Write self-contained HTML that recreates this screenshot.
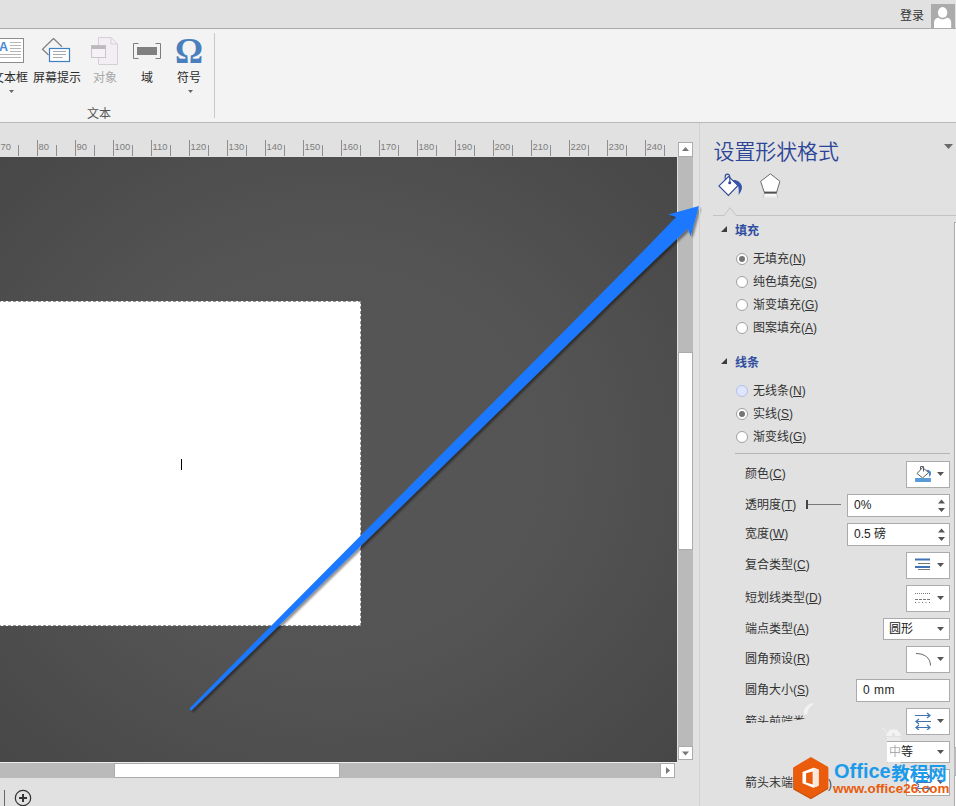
<!DOCTYPE html>
<html lang="zh-CN">
<head>
<meta charset="utf-8">
<title>设置形状格式</title>
<style>
*{box-sizing:border-box;margin:0;padding:0}
html,body{width:956px;height:806px;overflow:hidden;background:#e1e1e1}
body{position:relative;font-family:"Liberation Sans","Noto Sans CJK SC",sans-serif;font-size:12px;color:#333}
.abs{position:absolute}
.t{position:absolute;white-space:nowrap;line-height:16px;height:16px}
u{text-decoration:underline;text-underline-offset:1px}
/* top */
#topbar{left:0;top:0;width:956px;height:28px;background:#e1e1e1}
#topline{left:0;top:28px;width:956px;height:1px;background:#ababab}
#ribbon{left:0;top:29px;width:956px;height:93px;background:#f3f3f3}
#ribline{left:0;top:122px;width:956px;height:1px;background:#b9b9b9}
/* canvas */
#canvas{left:0;top:157px;width:677px;height:605px;background:radial-gradient(ellipse 520px 470px at 330px 300px,#565656 0%,#545454 45%,#4a4a4a 80%,#454545 100%);overflow:hidden}
#page{left:-2px;top:144px;width:363px;height:325px;background:#fff;border:1px dashed #969696}
#vtrack{left:678px;top:157px;width:15px;height:589px;background:#bababa}
.sbtn{position:absolute;background:#fff;border:1px solid #ababab}
#htrack{left:0;top:763px;width:661px;height:15px;background:#bababa}
/* panel */
#pline{left:699px;top:123px;width:1px;height:683px;background:#d2d2d2}
.radio{position:absolute;width:12px;height:12px;border-radius:50%;background:#fff;border:1px solid #a0a0a0}
.radio.on::after{content:"";position:absolute;left:2px;top:2px;width:6px;height:6px;border-radius:50%;background:#747474}
.box{position:absolute;background:#fff;border:1px solid #ababab}
.dd{position:absolute;width:7px;height:4px;background:#555;clip-path:polygon(0 0,100% 0,50% 100%)}
.hd{color:#2f4d9f;font-weight:bold}
</style>
</head>
<body>
<div id="topbar" class="abs"></div>
<div id="topline" class="abs"></div>
<div id="ribbon" class="abs"></div>
<div id="ribline" class="abs"></div>

<!-- top right login -->
<div class="t" style="left:900px;top:8px">登录</div>
<svg class="abs" style="left:931px;top:4px" width="24" height="24" viewBox="0 0 24 24"><rect width="24" height="24" fill="#ababab"/><ellipse cx="11.6" cy="8.400" rx="4.700" ry="5.300" fill="#fff"/><path d="M3 24v-5.5c0-3 2.2-4.7 4.6-4.7c1.2 1 2.6 1.5 4 1.5s2.800-.5 4-1.500c2.400 0 4.600 1.700 4.600 4.700V24z" fill="#fff"/></svg>


<!-- ribbon: text box -->
<svg class="abs" style="left:0;top:37px" width="26" height="27" viewBox="0 0 26 27">
  <rect x="-2" y="1.500" width="25.500" height="24" fill="#fff" stroke="#8c8c8c" stroke-width="1"/>
  <path d="M10 5.500h11M10 8.500h11M10 11.500h11M10 14.500h11M0 17.500h21M0 20.500h21" stroke="#b5b5b5" stroke-width="1"/>
  <text x="-1" y="14.200" font-family="Liberation Sans, sans-serif" font-size="12.5" font-weight="bold" fill="#4a8ad4">A</text>
</svg>
<div class="t" style="left:-8px;top:70px;color:#2b2b2b">文本框</div>
<div class="dd" style="left:9px;top:90px;width:5px;height:3px;background:#666"></div>

<!-- ribbon: screen tip -->
<svg class="abs" style="left:40px;top:36px" width="32" height="28" viewBox="0 0 32 28">
  <path d="M13.500 2.500L2.500 13.300l6 5.700M13.500 2.500l8.500 8.300" fill="none" stroke="#808080" stroke-width="1.200"/>
  <rect x="9.500" y="12.500" width="20" height="13" fill="#fff" stroke="#3f7fc4" stroke-width="1.200"/>
  <path d="M13 15.500h13M13 18.500h13M13 21.500h9.500" stroke="#a9a9a9" stroke-width="1"/>
</svg>
<div class="t" style="left:33px;top:70px;color:#2b2b2b">屏幕提示</div>

<!-- ribbon: object (disabled) -->
<svg class="abs" style="left:90px;top:36px" width="30" height="30" viewBox="0 0 30 30">
  <path d="M8.500 1.500h12.500l6.500 6.500v20.500h-19z" fill="#f3eef3" stroke="#d5d0d5" stroke-width="1"/>
  <path d="M21 1.500v6.500h6.500" fill="none" stroke="#d5d0d5" stroke-width="1"/>
  <rect x="1.500" y="9.500" width="14" height="12" fill="#f6f1f6" stroke="#c9c5c9" stroke-width="1"/>
  <rect x="1.500" y="9.500" width="14" height="3.500" fill="#bcb9bc"/>
</svg>
<div class="t" style="left:93px;top:70px;color:#a8a8a8">对象</div>

<!-- ribbon: field -->
<svg class="abs" style="left:132px;top:42px" width="30" height="18" viewBox="0 0 30 18">
  <path d="M6.500 1.500h-5v15h5M23.500 1.500h5v15h-5" fill="none" stroke="#7d7d7d" stroke-width="1"/>
  <rect x="5" y="5" width="20" height="8" fill="#808080"/>
</svg>
<div class="t" style="left:141px;top:70px;color:#2b2b2b">域</div>

<!-- ribbon: symbol -->
<div class="abs" style="left:174px;top:32px;width:30px;height:40px;line-height:40px;text-align:center;font-family:'Liberation Serif',serif;font-weight:bold;font-size:35px;color:#4a7fbd">Ω</div>
<div class="t" style="left:177px;top:70px;color:#2b2b2b">符号</div>
<div class="dd" style="left:188px;top:90px;width:5px;height:3px;background:#666"></div>

<div class="t" style="left:87px;top:106px;color:#555">文本</div>
<div class="abs" style="left:214px;top:33px;width:1px;height:85px;background:#c8c8c8"></div>


<svg class="abs" style="left:0;top:123px" width="677" height="34" viewBox="0 0 677 34">
<path d="M-0.5 17v16M18.5 22v11M37.5 17v16M56.5 22v11M75.5 17v16M94.5 22v11M113.5 17v16M132.5 22v11M151.5 17v16M170.5 22v11M189.5 17v16M208.5 22v11M227.5 17v16M246.5 22v11M265.5 17v16M284.5 22v11M303.5 17v16M322.5 22v11M341.5 17v16M360.5 22v11M379.5 17v16M398.5 22v11M417.5 17v16M436.5 22v11M455.5 17v16M474.5 22v11M493.5 17v16M512.5 22v11M531.5 17v16M550.5 22v11M569.5 17v16M588.5 22v11M607.5 17v16M626.5 22v11M645.5 17v16M664.5 22v11" stroke="#8e8e8e" stroke-width="1" fill="none"/>
<g font-family="Liberation Sans, sans-serif" font-size="9.4" fill="#7c7c7c"><text x="0.6" y="27">70</text><text x="38.6" y="27">80</text><text x="76.6" y="27">90</text><text x="114.6" y="27">100</text><text x="152.6" y="27">110</text><text x="190.6" y="27">120</text><text x="228.6" y="27">130</text><text x="266.6" y="27">140</text><text x="304.6" y="27">150</text><text x="342.6" y="27">160</text><text x="380.6" y="27">170</text><text x="418.6" y="27">180</text><text x="456.6" y="27">190</text><text x="494.6" y="27">200</text><text x="532.6" y="27">210</text><text x="570.6" y="27">220</text><text x="608.6" y="27">230</text><text x="646.6" y="27">240</text></g>
</svg>

<!-- canvas -->
<div id="canvas" class="abs">
  <div id="page" class="abs"></div>
  <div class="abs" style="left:181px;top:302px;width:1px;height:11px;background:#000"></div>
</div>
<div id="vtrack" class="abs"></div>
<div class="sbtn" style="left:678px;top:142px;width:15px;height:15px"></div>
<div class="sbtn" style="left:678px;top:352px;width:15px;height:198px;border-color:#ababab"></div>
<div class="sbtn" style="left:678px;top:746px;width:15px;height:14px"></div>
<svg class="abs" style="left:678px;top:142px" width="15" height="15"><path d="M4 9l3.500-4l3.500 4z" fill="#777"/></svg>
<svg class="abs" style="left:678px;top:746px" width="15" height="14"><path d="M4 5.500h7l-3.500 4z" fill="#777"/></svg>
<div class="abs" style="left:0;top:762px;width:677px;height:1px;background:#ececec"></div>
<div id="htrack" class="abs"></div>
<div class="sbtn" style="left:114px;top:763px;width:226px;height:15px"></div>
<div class="sbtn" style="left:660px;top:763px;width:15px;height:15px"></div>
<svg class="abs" style="left:660px;top:763px" width="15" height="15"><path d="M6 4l4 3.500l-4 3.500z" fill="#777"/></svg>

<!-- bottom-left -->
<div class="abs" style="left:4px;top:790px;width:1px;height:16px;background:#666"></div>
<svg class="abs" style="left:14px;top:789px" width="18" height="17" viewBox="0 0 18 17"><circle cx="9" cy="9" r="7.700" fill="none" stroke="#333" stroke-width="1.200"/><path d="M5 9h8M9 5v8" stroke="#333" stroke-width="2"/></svg>


<svg class="abs" style="left:0;top:0;pointer-events:none" width="956" height="806" viewBox="0 0 956 806">
  <defs><filter id="sh" x="-5%" y="-5%" width="110%" height="110%"><feGaussianBlur in="SourceAlpha" stdDeviation="1.1"/><feOffset dx="1.6" dy="2"/><feComponentTransfer><feFuncA type="linear" slope="0.44"/></feComponentTransfer><feMerge><feMergeNode/><feMergeNode in="SourceGraphic"/></feMerge></filter></defs>
  <path d="M190.0 707.9 L218.0 679.4 L249.6 647.4 L358.8 537.4 L467.4 428.2 L557.0 338.2 L610.5 284.2 L647.7 246.4 L676.1 217.1 L668.3 214.4 L699.0 205.9 L690.5 236.3 L687.9 228.4 L658.0 256.8 L619.8 293.6 L565.3 346.5 L474.4 435.3 L364.1 542.7 L253.0 650.8 L220.7 682.1 L191.8 709.9 A1.35 1.35 0 0 1 190.0 707.9Z" fill="#1a79ff" filter="url(#sh)"/>
</svg>


<!-- panel -->
<div id="pline" class="abs"></div>

<div class="abs" style="left:713.500px;top:138px;font-size:21px;line-height:28px;font-weight:350;color:#2b4497;white-space:nowrap;letter-spacing:-0.100px">设置形状格式</div>
<div class="dd" style="left:944px;top:144px;width:9px;height:5px;background:#6a6a6a"></div>

<!-- tab icons -->
<svg class="abs" style="left:717px;top:172px" width="28" height="27" viewBox="0 0 28 27">
  <path d="M15.800 8C19.500 7.400 24.100 10 24.900 14.300C25.400 17.500 23.600 20.500 21.500 23C22 19.500 21.800 16.500 21 13.500Z" fill="#3553ad"/>
  <path d="M2 13.900L11.600 4.500L21 13.500L11.400 23.500z" fill="#fff" stroke="#2f4899" stroke-width="1.100" stroke-linejoin="miter"/>
  <path d="M8.200 8V4.600a2.300 2.500 0 0 1 4.600 0V10.500" fill="none" stroke="#2f4899" stroke-width="1.100"/>
  <circle cx="12.700" cy="10.700" r="1.500" fill="#2f4899"/>
</svg>
<svg class="abs" style="left:758px;top:172px" width="26" height="28" viewBox="0 0 26 28">
  <defs><linearGradient id="pg" x1="0" y1="0" x2="0" y2="1"><stop offset="0" stop-color="#fff" stop-opacity="1"/><stop offset="1" stop-color="#fff" stop-opacity="0"/></linearGradient></defs>
  <path d="M6.400 21.500h12.100l1.500 5h-15.100z" fill="url(#pg)"/>
  <path d="M6.400 21.500l-1.400 4.500M18.500 21.500l1.400 4.500" stroke="#bdbdbd" stroke-width="1" opacity=".7"/>
  <path d="M12.400 1.800L21.900 9.300L18.500 20.600h-12.100L2.600 9.300z" fill="#fff" stroke="#6b6b6b" stroke-width="1" stroke-linejoin="round"/>
  <path d="M6.200 20.600h12.500" stroke="#505050" stroke-width="2"/>
</svg>

<!-- separator with notch -->
<svg class="abs" style="left:713px;top:206px" width="243" height="11" viewBox="0 0 243 11">
  <path d="M0 9.500h11l6-7.800l6 7.800H243" fill="none" stroke="#c3c3c3" stroke-width="1"/>
</svg>

<!-- section: fill -->
<svg class="abs" style="left:720px;top:225px" width="8" height="8"><path d="M7 1v6H1z" fill="#3c3c3c"/></svg>
<div class="t hd" style="left:735px;top:223px">填充</div>

<div class="radio on" style="left:736px;top:253px"></div>
<div class="t" style="left:753px;top:251px">无填充(<u>N</u>)</div>
<div class="radio" style="left:736px;top:276px"></div>
<div class="t" style="left:753px;top:274px">纯色填充(<u>S</u>)</div>
<div class="radio" style="left:736px;top:299px"></div>
<div class="t" style="left:753px;top:297px">渐变填充(<u>G</u>)</div>
<div class="radio" style="left:736px;top:322px"></div>
<div class="t" style="left:753px;top:320px">图案填充(<u>A</u>)</div>

<!-- section: line -->
<svg class="abs" style="left:720px;top:357px" width="8" height="8"><path d="M7 1v6H1z" fill="#3c3c3c"/></svg>
<div class="t hd" style="left:735px;top:355px">线条</div>

<div class="radio" style="left:736px;top:385px;background:#dfe5fb;border-color:#b4bfe9"></div>
<div class="t" style="left:753px;top:383px">无线条(<u>N</u>)</div>
<div class="radio on" style="left:736px;top:408px"></div>
<div class="t" style="left:753px;top:406px">实线(<u>S</u>)</div>
<div class="radio" style="left:736px;top:431px"></div>
<div class="t" style="left:753px;top:429px">渐变线(<u>G</u>)</div>

<div class="abs" style="left:735px;top:453px;width:215px;height:1px;background:#b4b4b4"></div>

<!-- color -->
<div class="t" style="left:745px;top:466px">颜色(<u>C</u>)</div>
<div class="box" style="left:906px;top:461px;width:44px;height:27px"></div>
<svg class="abs" style="left:913px;top:464px" width="22" height="20" viewBox="0 0 22 20">
  <path d="M13.400 5.700C16 5.500 17.900 7 18 9.200C18 10.800 17 12 15.800 13.200C16.200 11.500 16.200 10 15.700 8.600Z" fill="#3f7fc4"/>
  <path d="M4 9.500L9.600 3.600L15.700 8.600L9.600 13.900z" fill="#fff" stroke="#5a5a5a" stroke-width="1" stroke-linejoin="miter"/>
  <path d="M7.500 5.500V2.500h3V7.500" fill="none" stroke="#5a5a5a" stroke-width="1"/>
  <rect x="2.100" y="14" width="15.800" height="4" fill="#5b9bd5"/>
</svg>
<div class="dd" style="left:937px;top:472px"></div>

<!-- transparency -->
<div class="t" style="left:745px;top:497px">透明度(<u>T</u>)</div>
<div class="abs" style="left:806px;top:500px;width:2px;height:9px;background:#444"></div>
<div class="abs" style="left:808px;top:504px;width:33px;height:1px;background:#777"></div>
<div class="box" style="left:847px;top:494px;width:103px;height:23px"></div>
<div class="t" style="left:854px;top:497px;color:#222">0%</div>
<svg class="abs" style="left:937px;top:498px" width="9" height="15"><path d="M1 5.500l3.500-4l3.500 4zM1 10h7l-3.500 4z" fill="#555"/></svg>

<!-- width -->
<div class="t" style="left:745px;top:526px">宽度(<u>W</u>)</div>
<div class="box" style="left:847px;top:523px;width:103px;height:23px"></div>
<div class="t" style="left:854px;top:526px;color:#222">0.5 磅</div>
<svg class="abs" style="left:937px;top:527px" width="9" height="15"><path d="M1 5.500l3.500-4l3.500 4zM1 10h7l-3.500 4z" fill="#555"/></svg>

<!-- compound type -->
<div class="t" style="left:745px;top:557px">复合类型(<u>C</u>)</div>
<div class="box" style="left:906px;top:552px;width:44px;height:27px"></div>
<svg class="abs" style="left:914px;top:557px" width="18" height="16" viewBox="0 0 18 16">
  <path d="M1 2.500h15M1 10h15" stroke="#3f73b5" stroke-width="2"/>
  <path d="M4 6.500h12M4 12.500h12" stroke="#777" stroke-width="1"/>
</svg>
<div class="dd" style="left:937px;top:563px"></div>

<!-- dash type -->
<div class="t" style="left:745px;top:590px">短划线类型(<u>D</u>)</div>
<div class="box" style="left:906px;top:585px;width:44px;height:27px"></div>
<svg class="abs" style="left:914px;top:590px" width="18" height="16" viewBox="0 0 18 16">
  <path d="M1 3.500h15" stroke="#777" stroke-width="1" stroke-dasharray="1 1"/>
  <path d="M1 9.500h15" stroke="#777" stroke-width="1" stroke-dasharray="3 1"/>
  <path d="M1 12.500h15" stroke="#777" stroke-width="1" stroke-dasharray="1 2.500"/>
</svg>
<div class="dd" style="left:937px;top:596px"></div>

<!-- cap type -->
<div class="t" style="left:745px;top:621px">端点类型(<u>A</u>)</div>
<div class="box" style="left:883px;top:618px;width:67px;height:22px"></div>
<div class="t" style="left:889px;top:621px;color:#222">圆形</div>
<div class="dd" style="left:937px;top:627px"></div>

<!-- round preset -->
<div class="t" style="left:745px;top:651px">圆角预设(<u>R</u>)</div>
<div class="box" style="left:906px;top:646px;width:44px;height:27px"></div>
<svg class="abs" style="left:914px;top:651px" width="18" height="16" viewBox="0 0 18 16">
  <path d="M2 2.500c8 0 14.500 4 14.500 12" fill="none" stroke="#666" stroke-width="1"/>
</svg>
<div class="dd" style="left:937px;top:657px"></div>

<!-- round size -->
<div class="t" style="left:745px;top:682px">圆角大小(<u>S</u>)</div>
<div class="box" style="left:856px;top:679px;width:94px;height:23px"></div>
<div class="t" style="left:863px;top:682px;color:#222;letter-spacing:0.500px">0 mm</div>

<!-- arrow begin -->
<div class="box" style="left:906px;top:708px;width:44px;height:27px"></div>
<svg class="abs" style="left:914px;top:712px" width="18" height="18" viewBox="0 0 18 18">
  <path d="M1 3.500h15M13 1l3 2.500l-3 2.500M17 9.500H2M5 7l-3 2.500l3 2.500M2 15.500h14M5 13l-3 2.500l3 2.500M13 13l3 2.500l-3 2.500" fill="none" stroke="#3f73b5" stroke-width="1.200"/>
</svg>
<div class="dd" style="left:937px;top:719px"></div>

<!-- medium -->
<div class="box" style="left:887px;top:741px;width:63px;height:22px;border-left:none"></div>
<div class="t" style="left:889px;top:744px;color:#222">中等</div>
<div class="dd" style="left:937px;top:750px"></div>
<svg class="abs" style="left:880px;top:726px" width="24" height="38" viewBox="0 0 24 38">
  <path d="M2 2.500c2 0 3 1 3.800 4" fill="none" stroke="#f4f4f4" stroke-width="1" opacity=".8"/>
  <path d="M6.500 8.500q0-2 2-2.500l1.500-2.500h7l1.500 2.500q2 .500 2 2.500v1.500h-5.500q0-3-1.500-3t-1.500 3h-5.500z" fill="#f6f6f6" opacity=".85"/>
  <rect x="7" y="11.500" width="14" height="3" fill="#efefef" opacity=".8"/>
  <rect x="7.500" y="16" width="13" height="21" fill="#fff" opacity=".62"/>
</svg>

<!-- arrow end -->
<div class="t" style="left:745px;top:775px">箭头末端</div>
<div class="box" style="left:906px;top:769px;width:44px;height:27px"></div>
<svg class="abs" style="left:914px;top:773px" width="18" height="18" viewBox="0 0 18 18">
  <path d="M1 3.500h15M13 1l3 2.500l-3 2.500M17 9.500H2M5 7l-3 2.500l3 2.500M2 15.500h14M5 13l-3 2.500l3 2.500M13 13l3 2.500l-3 2.500" fill="none" stroke="#3f73b5" stroke-width="1.200"/>
</svg>
<div class="dd" style="left:937px;top:780px"></div>

<!-- panel scrollbar sliver -->
<div class="abs" style="left:954px;top:222px;width:2px;height:526px;background:#fff;border-left:1px solid #ababab;border-top:1px solid #ababab;border-bottom:1px solid #ababab"></div>
<div class="abs" style="left:954px;top:748px;width:2px;height:27px;background:#bababa"></div>
<div class="abs" style="left:954px;top:775px;width:2px;height:31px;background:#fff;border-left:1px solid #ababab;border-top:1px solid #ababab"></div>
<div class="abs" style="left:745px;top:713px;width:61px;height:10px;overflow:hidden;clip-path:polygon(0 0,100% 0,100% 55%,55% 100%,0 100%)"><div class="t" style="left:0;top:1px;color:#333">箭头前端类型(<u>B</u>)</div></div>
<svg class="abs" style="left:802px;top:702px" width="14" height="14" viewBox="0 0 14 14"><path d="M2.800 12.500C1.500 7.500 5 2 11.500 1.800C8 4 5.500 8 5.500 12C4.500 12.600 3.500 12.800 2.800 12.500Z" fill="#f1f1f1"/><path d="M2.800 12.500C1.500 7.500 5 2 11.500 1.800" fill="none" stroke="#fafafa" stroke-width=".8"/></svg>
<div class="t" style="left:828px;top:776px;color:#444">)</div>
<svg class="abs" style="left:790px;top:754px" width="42" height="50" viewBox="0 0 42 50">
  <path d="M20.900 3.900L38.200 14v21L20.900 45.300L3.300 35.400V14.400z" fill="#c9500b"/>
  <path d="M20.900 2.900L38.200 13v20.800L20.900 43.900L3.300 34V13.400z" fill="#ea5b0c"/>
  <path d="M12.500 17.900L23.400 13.700L28.600 15.400V31.800L23.400 33.800L12.500 29.300z" fill="#fff"/>
  <path d="M23.400 13.700L28.600 15.400V31.800L23.400 33.800z" fill="#fbe6db"/>
  <path d="M16.100 19.300L22.700 17.500V30.400L16.100 28.600z" fill="#ea5b0c"/>
</svg>
<div class="abs" style="left:834px;top:757px;height:28px;line-height:28px;font-size:20px;font-weight:bold;color:#1d9beb;white-space:nowrap">Office<span style="font-size:18.500px;position:relative;top:1.500px;margin-left:0.500px">教程网</span></div>
<div class="abs" style="left:833px;top:779.500px;height:18px;line-height:18px;font-size:13.400px;font-weight:bold;color:#ea5b0c;white-space:nowrap">www.office26.com</div>




</body>
</html>
